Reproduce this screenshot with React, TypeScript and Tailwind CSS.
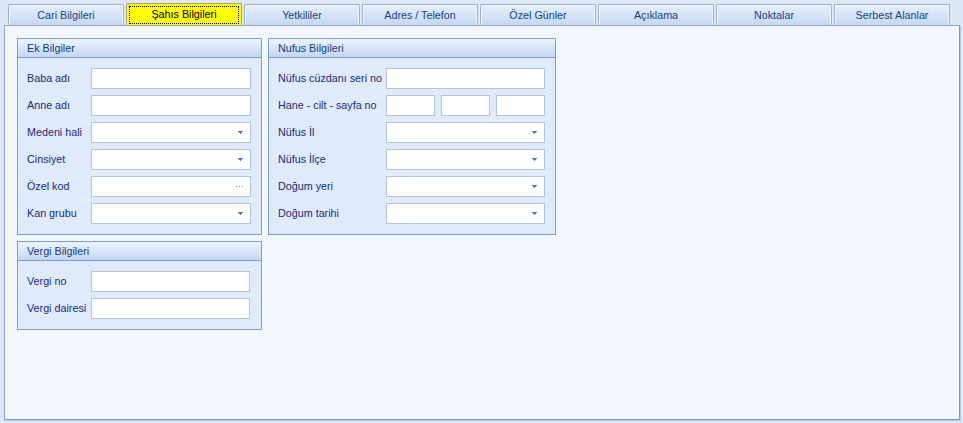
import React from "react";

const tabs = [
  "Cari Bilgileri",
  "Şahıs Bilgileri",
  "Yetkililer",
  "Adres / Telefon",
  "Özel Günler",
  "Açıklama",
  "Noktalar",
  "Serbest Alanlar",
];

function Arrow() {
  return (
    <svg width="5" height="3" viewBox="0 0 5 3" shapeRendering="crispEdges">
      <path d="M0 0h5v1h-1v1h-1v1h-1v-1h-1v-1h-1z" fill="#5a7cb6" />
    </svg>
  );
}

function Dots() {
  return (
    <svg width="8" height="1" viewBox="0 0 8 1" shapeRendering="crispEdges">
      <rect x="0" y="0" width="1" height="1" fill="#6a88bd" />
      <rect x="3" y="0" width="1" height="1" fill="#6a88bd" />
      <rect x="6" y="0" width="1" height="1" fill="#6a88bd" />
    </svg>
  );
}

function Input({ kind, w = "w-[160px]" }: { kind?: "combo" | "dots"; w?: string }) {
  return (
    <div
      className={`${w} shrink-0 h-[21px] bg-white border border-[#b1c5e0] flex items-center justify-end ${
        kind === "dots" ? "pr-[6px]" : "pr-[7px]"
      }`}
    >
      {kind === "combo" ? <Arrow /> : kind === "dots" ? <Dots /> : null}
    </div>
  );
}

function Row({
  label,
  labelW,
  children,
}: {
  label: string;
  labelW: string;
  children: React.ReactNode;
}) {
  return (
    <div className="flex items-center h-[21px]">
      <div className={`${labelW} shrink-0 text-[#1b2a80] whitespace-nowrap`}>{label}</div>
      {children}
    </div>
  );
}

function Group({
  title,
  children,
  className = "",
}: {
  title: string;
  children: React.ReactNode;
  className?: string;
}) {
  return (
    <div className={`border border-[#7b9ed3] bg-[#dfeafa] ${className}`}>
      <div className="h-[19px] border-b border-[#7b9ed3] bg-gradient-to-b from-[#eef4fd] to-[#c2d7f4] flex items-center pl-[9px] text-[#15398a]">
        {title}
      </div>
      <div className="pl-[9px] pt-[10px] pb-[10px] flex flex-col gap-[6px]">{children}</div>
    </div>
  );
}

export default function App() {
  return (
    <div className="w-[963px] h-[423px] bg-[#dde7f5] font-['Liberation_Sans',Arial,sans-serif] text-[10.75px] leading-none overflow-hidden">
      {/* Tabs */}
      <div className="h-[25px] pl-[8px] pt-[3px] flex items-end gap-[2px]">
        {tabs.map((t, i) =>
          i === 1 ? (
            <div
              key={t}
              className="relative w-[116px] h-[22px] bg-[#ffff00] border border-[#a8a878] border-b-0 rounded-t-[2px] flex items-center justify-center text-black"
            >
              <div className="absolute left-[2px] right-[2px] top-[2px] bottom-[1px] border border-dotted border-black" />
              <span className="relative">{t}</span>
            </div>
          ) : (
            <div
              key={t}
              className="w-[116px] h-[21px] border border-[#9db0d0] border-b-0 rounded-t-[2px] bg-gradient-to-b from-[#e6effb] via-[#d6e4f7] to-[#c4d8f2] shadow-[inset_1px_1px_0_#f5f9ff,inset_-1px_0_0_#eef4fd] flex items-center justify-center text-[#15428b]"
            >
              {t}
            </div>
          )
        )}
      </div>

      {/* Panel */}
      <div className="ml-[4px] w-[956px] h-[395px] bg-[#f2f7fe] border border-[#8ea6d6] border-r-[#7d95c7] border-b-[#7d95c7] shadow-[1px_1px_0_#b4c5e5] pl-[12px] pt-[12px]">
        <div className="flex items-start gap-[6px]">
          <div className="w-[245px] flex flex-col gap-[6px]">
            <Group title="Ek Bilgiler">
              <Row label="Baba adı" labelW="w-[64px]">
                <Input />
              </Row>
              <Row label="Anne adı" labelW="w-[64px]">
                <Input />
              </Row>
              <Row label="Medeni hali" labelW="w-[64px]">
                <Input kind="combo" />
              </Row>
              <Row label="Cinsiyet" labelW="w-[64px]">
                <Input kind="combo" />
              </Row>
              <Row label="Özel kod" labelW="w-[64px]">
                <Input kind="dots" />
              </Row>
              <Row label="Kan grubu" labelW="w-[64px]">
                <Input kind="combo" />
              </Row>
            </Group>
            <Group title="Vergi Bilgileri">
              <Row label="Vergi no" labelW="w-[64px]">
                <Input w="w-[159px]" />
              </Row>
              <Row label="Vergi dairesi" labelW="w-[64px]">
                <Input w="w-[159px]" />
              </Row>
            </Group>
          </div>

          <div className="w-[288px]">
            <Group title="Nufus Bilgileri">
              <Row label="Nüfus cüzdanı seri no" labelW="w-[108px]">
                <Input w="w-[159px]" />
              </Row>
              <Row label="Hane - cilt - sayfa no" labelW="w-[108px]">
                <div className="flex gap-[6px]">
                  <Input w="w-[49px]" />
                  <Input w="w-[49px]" />
                  <Input w="w-[49px]" />
                </div>
              </Row>
              <Row label="Nüfus İl" labelW="w-[108px]">
                <Input kind="combo" w="w-[159px]" />
              </Row>
              <Row label="Nüfus İlçe" labelW="w-[108px]">
                <Input kind="combo" w="w-[159px]" />
              </Row>
              <Row label="Doğum yeri" labelW="w-[108px]">
                <Input kind="combo" w="w-[159px]" />
              </Row>
              <Row label="Doğum tarihi" labelW="w-[108px]">
                <Input kind="combo" w="w-[159px]" />
              </Row>
            </Group>
          </div>
        </div>
      </div>
    </div>
  );
}
